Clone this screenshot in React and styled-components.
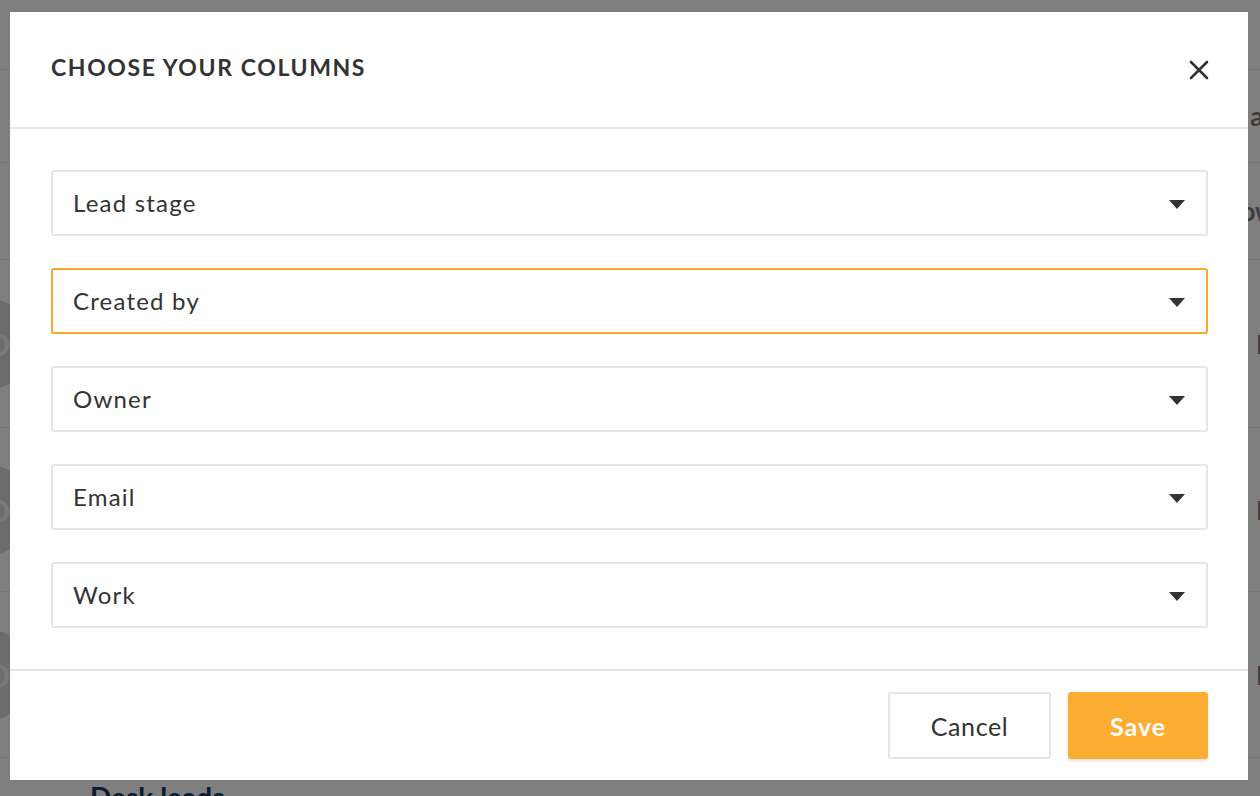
import React from "react";
import styled, { createGlobalStyle } from "styled-components";

const GlobalStyle = createGlobalStyle`
  html, body {
    margin: 0;
    padding: 0;
    width: 100%;
    height: 100%;
    overflow: hidden;
  }
  body {
    font-family: "Lato", "Open Sans", sans-serif;
    color: #333;
    background: #fff;
  }
  * { box-sizing: border-box; }
`;

const columns = ["Lead stage", "Created by", "Owner", "Email", "Work"];

// page behind the overlay, only its edges show
const bgRows = [
  { h: 70 },
  { h: 93, right: "ac" },
  { h: 97, right: "ow" },
  { h: 168, right: "N", avatar: true },
  { h: 164, right: "N", avatar: true },
  { h: 166, right: "N", avatar: true },
];

const App = () => {
  const selected = 1;

  return (
    <>
      <GlobalStyle />
      <Page>
        {bgRows.map((r, i) => (
          <BgRow key={i} height={r.h}>
            {r.avatar ? <Avatar>D</Avatar> : <span />}
            <BgText>{r.right}</BgText>
          </BgRow>
        ))}
        <BgTitle>Desk leads</BgTitle>
      </Page>
      <Overlay>
        <Modal>
          <Header>
            <Title>Choose your columns</Title>
            <CloseButton aria-label="close">
              <svg width="22" height="22" viewBox="0 0 22 22">
                <path
                  d="M3 3 L19 19 M19 3 L3 19"
                  stroke="#333"
                  strokeWidth="2.6"
                  strokeLinecap="round"
                />
              </svg>
            </CloseButton>
          </Header>
          <Body>
            {columns.map((c, i) => (
              <Select key={c} active={i === selected}>
                <span>{c}</span>
                <Caret />
              </Select>
            ))}
          </Body>
          <Footer>
            <Button>Cancel</Button>
            <Button primary>Save</Button>
          </Footer>
        </Modal>
      </Overlay>
    </>
  );
};

export default App;

const Page = styled.div`
  width: 1260px;
  height: 796px;
  display: flex;
  flex-direction: column;
  overflow: hidden;
`;

const BgRow = styled.div`
  height: ${(p) => p.height}px;
  flex-shrink: 0;
  border-bottom: 1px solid #e6e6e6;
  display: flex;
  align-items: center;
  justify-content: space-between;
`;

const Avatar = styled.div`
  width: 92px;
  height: 92px;
  margin-left: -60px;
  border-radius: 50%;
  background: #d8d8dc;
  color: #f4f4f4;
  font-size: 30px;
  font-weight: 700;
  display: flex;
  align-items: center;
  justify-content: flex-end;
  padding-right: 22px;
`;

const BgText = styled.span`
  font-size: 26px;
  color: #7a7a7a;
  margin-right: -16px;
  font-weight: 700;
`;

const BgTitle = styled.div`
  margin-top: 22px;
  padding-left: 90px;
  font-size: 28px;
  font-weight: 700;
  color: #1b3a5c;
`;

const Overlay = styled.div`
  position: fixed;
  inset: 0;
  background: rgba(0, 0, 0, 0.5);
  padding: 12px 12px 16px 10px;
  display: flex;
`;

const Modal = styled.div`
  width: 1238px;
  height: 768px;
  background: #fff;
  display: flex;
  flex-direction: column;
`;

const Header = styled.div`
  height: 117px;
  flex-shrink: 0;
  border-bottom: 2px solid #e6e6e6;
  display: flex;
  align-items: flex-start;
  justify-content: space-between;
  padding: 40px 38px 0 41px;
`;

const Title = styled.h2`
  margin: 0;
  font-size: 23px;
  font-weight: 700;
  text-transform: uppercase;
  letter-spacing: 1.6px;
  color: #333;
  line-height: 30px;
`;

const CloseButton = styled.button`
  border: none;
  background: none;
  padding: 0;
  margin-top: 7px;
  width: 22px;
  height: 22px;
  cursor: pointer;
`;

const Body = styled.div`
  flex: 1;
  display: flex;
  flex-direction: column;
  gap: 32px;
  padding: 41px 40px 0 41px;
  border-bottom: 2px solid #e6e6e6;
`;

const Select = styled.div`
  height: 66px;
  border: 2px solid ${(p) => (p.active ? "#f9a82c" : "#e6e6e6")};
  border-radius: 3px;
  display: flex;
  align-items: center;
  justify-content: space-between;
  padding: 0 21px 2px 20px;
  font-size: 24px;
  letter-spacing: 1.2px;
  color: #333;
`;

const Caret = styled.span`
  width: 0;
  height: 0;
  border-left: 8px solid transparent;
  border-right: 8px solid transparent;
  border-top: 9px solid #333;
  margin-top: 5px;
`;

const Footer = styled.div`
  height: 109px;
  flex-shrink: 0;
  display: flex;
  align-items: center;
  justify-content: flex-end;
  gap: 17px;
  padding: 0 40px 0 0;
`;

const Button = styled.button`
  height: 67px;
  width: ${(p) => (p.primary ? "140px" : "163px")};
  border-radius: 3px;
  border: 2px solid ${(p) => (p.primary ? "#fdad32" : "#e6e6e6")};
  background: ${(p) => (p.primary ? "#fdad32" : "#fff")};
  color: ${(p) => (p.primary ? "#fff" : "#333")};
  font-family: "Lato", "Open Sans", sans-serif;
  font-size: 25px;
  letter-spacing: ${(p) => (p.primary ? "1px" : "0.6px")};
  font-weight: ${(p) => (p.primary ? 700 : 400)};
  box-shadow: ${(p) => (p.primary ? "0 2px 3px rgba(0,0,0,0.12)" : "none")};
  cursor: pointer;
`;
